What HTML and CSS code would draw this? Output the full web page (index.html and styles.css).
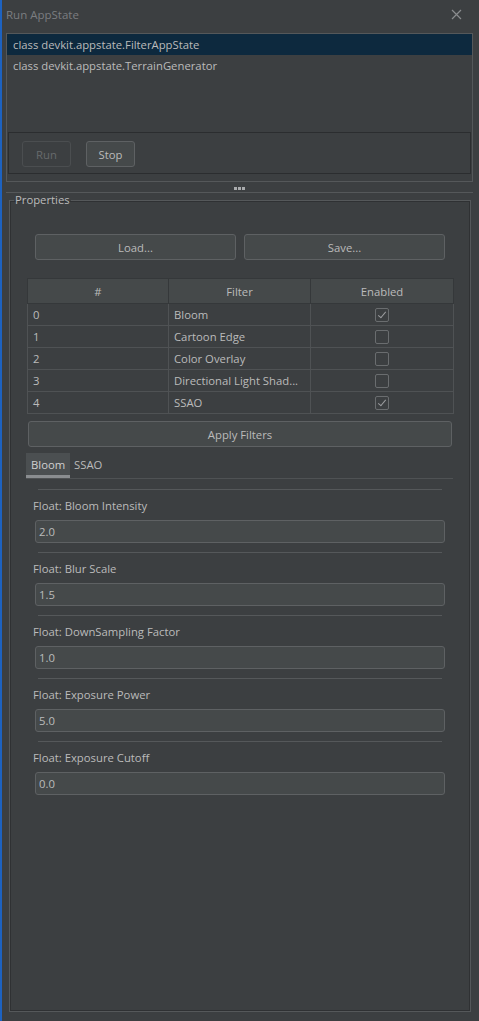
FILE: index.html
```html
<!DOCTYPE html>
<html>
<head>
<meta charset="utf-8">
<link rel="stylesheet" href="styles.css">
</head>
<body>
<div class="window">
  <div class="titlebar">
    <span class="title">Run AppState</span>
    <svg class="close" width="11" height="11" viewBox="0 0 11 11"><path d="M1 1 L10 10 M10 1 L1 10" stroke="#8a8c8e" stroke-width="1.2" fill="none"/></svg>
  </div>

  <div class="frame">
    <div class="list">
      <div class="list-row selected">class devkit.appstate.FilterAppState</div>
      <div class="list-row">class devkit.appstate.TerrainGenerator</div>
    </div>
    <div class="button-panel">
      <button class="btn btn-small disabled">Run</button>
      <button class="btn btn-small">Stop</button>
    </div>
  </div>

  <div class="splitter">
    <div class="dots"><span></span><span></span><span></span></div>
  </div>

  <fieldset class="props">
    <legend>Properties</legend>
    <div class="load-save">
      <button class="btn btn-wide">Load...</button>
      <button class="btn btn-wide">Save...</button>
    </div>

    <table class="filters">
      <thead>
        <tr><th class="c1">#</th><th class="c2">Filter</th><th class="c3">Enabled</th></tr>
      </thead>
      <tbody>
        <tr><td>0</td><td>Bloom</td><td class="cb-cell"><span class="cb checked"></span></td></tr>
        <tr><td>1</td><td>Cartoon Edge</td><td class="cb-cell"><span class="cb"></span></td></tr>
        <tr><td>2</td><td>Color Overlay</td><td class="cb-cell"><span class="cb"></span></td></tr>
        <tr><td>3</td><td>Directional Light Shad...</td><td class="cb-cell"><span class="cb"></span></td></tr>
        <tr><td>4</td><td>SSAO</td><td class="cb-cell"><span class="cb checked"></span></td></tr>
      </tbody>
    </table>

    <button class="btn apply">Apply Filters</button>

    <div class="tabs">
      <div class="tab active">Bloom</div>
      <div class="tab">SSAO</div>
    </div>

    <div class="fields">
      <div class="field-block">
        <div class="sep"></div>
        <div class="label">Float: Bloom Intensity</div>
        <div class="input">2.0</div>
      </div>
      <div class="field-block">
        <div class="sep"></div>
        <div class="label">Float: Blur Scale</div>
        <div class="input">1.5</div>
      </div>
      <div class="field-block">
        <div class="sep"></div>
        <div class="label">Float: DownSampling Factor</div>
        <div class="input">1.0</div>
      </div>
      <div class="field-block">
        <div class="sep"></div>
        <div class="label">Float: Exposure Power</div>
        <div class="input">5.0</div>
      </div>
      <div class="field-block">
        <div class="sep"></div>
        <div class="label">Float: Exposure Cutoff</div>
        <div class="input">0.0</div>
      </div>
    </div>
  </fieldset>
</div>
</body>
</html>
```

FILE: styles.css
```css
* { box-sizing: border-box; }

html, body {
  margin: 0;
  padding: 0;
  background: #3c3f41;
  height: 100%;
}

body {
  border-left: 2px solid #1d62c0;
  font-family: "Open Sans", "Noto Sans", sans-serif;
  font-size: 11.3px;
  color: #bbbbbb;
}

.window {
  display: flex;
  flex-direction: column;
  height: 100%;
}

.titlebar {
  height: 28px;
  display: flex;
  align-items: center;
  justify-content: space-between;
  padding: 0 17px 0 4px;
  margin-bottom: 5px;
}

.title {
  color: #7b7d80;
  font-size: 11.5px;
}

.close { display: block; }

.frame {
  margin: 0 6px 0 4px;
  height: 149px;
  border: 1px solid #55585a;
  display: flex;
  flex-direction: column;
}

.list {
  height: 98px;
}

.list-row {
  height: 21px;
  line-height: 21px;
  padding-left: 6px;
  color: #bbbbbb;
}

.list-row.selected {
  background: #0d293e;
}

.button-panel {
  margin: 0 1px;
  height: 42px;
  border: 1px solid #2b2d2f;
  display: flex;
  align-items: flex-start;
  gap: 15px;
  padding: 8px 0 0 13px;
}

.btn {
  font-family: inherit;
  font-size: 11.3px;
  color: #bbbbbb;
  background: #45494a;
  border: 1px solid #5e6163;
  border-radius: 3px;
  height: 26px;
  padding: 0;
  cursor: default;
}

.btn-small {
  width: 49px;
}

.btn.disabled {
  background: transparent;
  border-color: #4b4e50;
  color: #676a6c;
}

.splitter {
  height: 11px;
  border-bottom: 1px solid #55585a;
  margin: 0 6px 0 4px;
  display: flex;
  justify-content: center;
  padding-top: 5px;
}

.dots {
  display: flex;
  gap: 1px;
  height: 3px;
}

.dots span {
  width: 3px;
  height: 3px;
  background: #a9abad;
  display: block;
}

.props {
  margin: 0 8px 9px 7px;
  padding: 0;
  border: 1px solid #55585a;
  box-shadow: inset 0 0 0 1px #2f3133;
  flex: 1;
  min-width: 0;
}

.props legend {
  margin-left: 4px;
  padding: 0 1px;
  line-height: 14px;
  font-size: 11.3px;
  color: #bbbbbb;
}

.load-save {
  display: flex;
  gap: 8px;
  padding: 0 25px;
  margin-top: 27px;
}

.btn-wide {
  flex: 1;
}

.filters {
  margin: 18px 17px 0;
  width: 426px;
  border-collapse: collapse;
  table-layout: fixed;
  border: 1px solid #4f5254;
}

.filters th {
  height: 25px;
  background: #45494a;
  font-weight: normal;
  color: #bbbbbb;
  border: 1px solid #35383a;
  font-size: 11.3px;
}

.filters .c1 { width: 141px; }
.filters .c2 { width: 142px; }
.filters .c3 { width: 143px; }

.filters td {
  height: 22px;
  padding: 0 0 0 5px;
  border: 1px solid #4f5254;
  color: #bbbbbb;
  white-space: nowrap;
  overflow: hidden;
}

.filters td.cb-cell {
  padding: 0;
  text-align: center;
}

.cb {
  display: inline-block;
  width: 14px;
  height: 14px;
  border: 1px solid #6a6d6f;
  border-radius: 2px;
  vertical-align: middle;
  position: relative;
}

.cb.checked::after {
  content: "";
  position: absolute;
  left: 4px;
  top: 1px;
  width: 3px;
  height: 7px;
  border-right: 1.5px solid #9c9ea0;
  border-bottom: 1.5px solid #9c9ea0;
  transform: rotate(40deg);
}

.apply {
  display: block;
  margin: 7px 18px 0;
  width: 424px;
}

.tabs {
  display: flex;
  margin: 6px 17px 0 16px;
  height: 26px;
  border-bottom: 1px solid #4f5254;
}

.tab {
  padding: 0 4px;
  line-height: 24px;
  color: #bbbbbb;
}

.tab.active {
  background: #4b4f51;
  border-bottom: 3px solid #8a8d90;
  padding: 0 3px 0 5px;
  width: 44px;
  color: #d0d0d0;
}

.fields {
  padding: 10px 25px 0;
}

.field-block {
  height: 63px;
}

.sep {
  height: 1px;
  background: #55585a;
  margin: 0 3px;
}

.label {
  margin: 8px 0 0 -2px;
  line-height: 16px;
  height: 16px;
  color: #bbbbbb;
}

.input {
  margin-top: 6px;
  height: 23px;
  line-height: 21px;
  border: 1px solid #5e6163;
  border-radius: 3px;
  background: #45494a;
  padding-left: 3px;
  color: #bbbbbb;
}
```
